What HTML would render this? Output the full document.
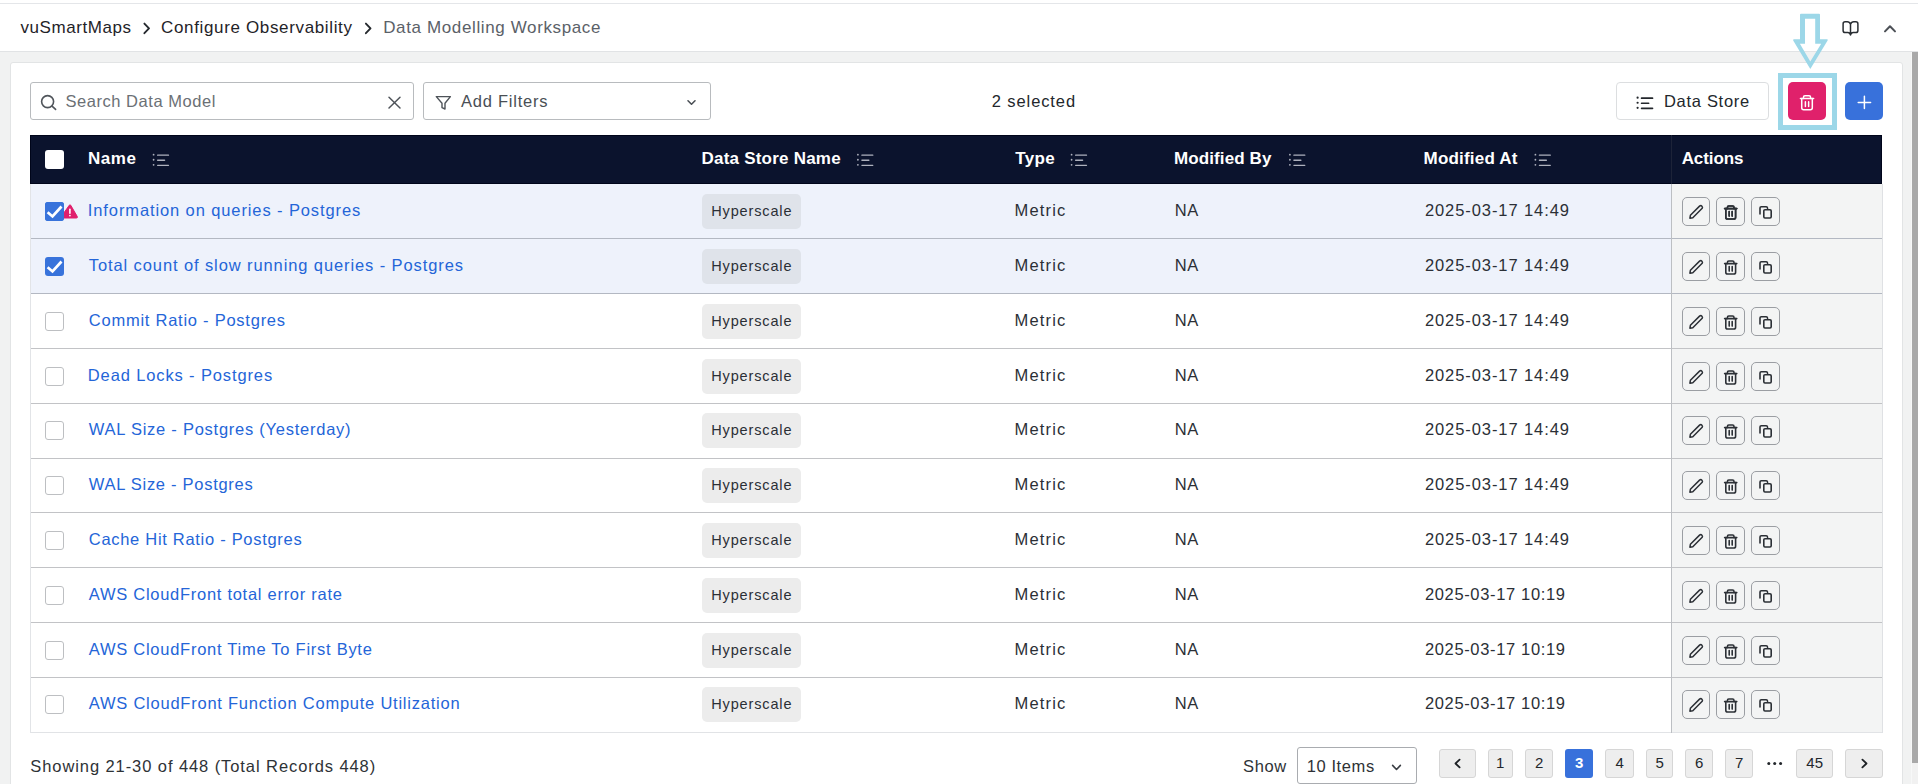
<!DOCTYPE html>
<html><head><meta charset="utf-8"><style>
html,body{margin:0;padding:0}
body{width:1918px;height:784px;overflow:hidden;position:relative;background:#fff;font-family:"Liberation Sans", sans-serif}
.a{position:absolute}
.t{position:absolute;white-space:pre}
</style></head><body>
<div class="a" style="left:0px;top:3px;width:1918px;height:1px;background:#e4e6e9"></div>
<div class="a" style="left:0px;top:51px;width:1918px;height:1px;background:#e1e3e5"></div>
<div class="a" style="left:0px;top:52px;width:1912px;height:732px;background:#f1f2f2"></div>
<div class="a" style="left:1911px;top:52px;width:1px;height:732px;background:#f7f8f8"></div>
<div class="a" style="left:1912px;top:52px;width:6px;height:732px;background:#f1f1f1"></div>
<div class="a" style="left:1912px;top:52px;width:6px;height:711px;background:#a9a9a9"></div>
<div class="a" style="left:10px;top:62px;width:1893px;height:738px;background:#fff;border:1px solid #e2e4e5;border-radius:3px;box-sizing:border-box"></div>
<div class="a" style="left:30px;top:82px;width:384px;height:38px;border:1px solid #b8bbbe;border-radius:3px;box-sizing:border-box;background:#fff"></div>
<div class="a" style="left:423px;top:82px;width:288px;height:38px;border:1px solid #b8bbbe;border-radius:3px;box-sizing:border-box;background:#fff"></div>
<div class="a" style="left:1616px;top:82px;width:153px;height:38px;border:1px solid #dcdee0;border-radius:4px;box-sizing:border-box;background:#fff"></div>
<div class="a" style="left:1778px;top:73px;width:59px;height:57px;border:5px solid #9cd7e8;box-sizing:border-box"></div>
<div class="a" style="left:1788px;top:82px;width:38px;height:38px;background:#e0216b;border-radius:5px"></div>
<div class="a" style="left:1845px;top:82px;width:38px;height:38px;background:#3871db;border-radius:5px"></div>
<div class="a" style="left:30px;top:135px;width:1852px;height:49px;background:#0b132d;border:1px solid #00051a;box-sizing:border-box"></div>
<div class="a" style="left:1671px;top:135px;width:1px;height:49px;background:#1d2338"></div>
<div class="a" style="left:45px;top:150px;width:19px;height:19px;background:#fff;border-radius:3px"></div>
<div class="a" style="left:30px;top:184px;width:1641px;height:54px;background:#eef2fb"></div>
<div class="a" style="left:1671px;top:184px;width:211px;height:54px;background:#f3f4f4"></div>
<div class="a" style="left:30px;top:238px;width:1853px;height:1px;background:#b3b8c2"></div>
<div class="a" style="left:702px;top:194px;width:99px;height:35px;background:#dfe3ea;border-radius:5px"></div>
<svg class="a" style="left:45px;top:202px" width="19" height="19" viewBox="0 0 19 19"><rect x="0" y="0" width="19" height="19" rx="3" fill="#3873db"/><path d="M2.6 10.2 L7.5 14.4 L16.5 4.5" fill="none" stroke="#fff" stroke-width="2.7"/></svg>
<div class="a" style="left:1682px;top:197px;width:28px;height:29px;border:1px solid #9b9ea3;border-radius:5px;box-sizing:border-box"></div>
<div class="a" style="left:1716px;top:197px;width:29px;height:29px;border:1px solid #9b9ea3;border-radius:5px;box-sizing:border-box"></div>
<div class="a" style="left:1751px;top:197px;width:29px;height:29px;border:1px solid #9b9ea3;border-radius:5px;box-sizing:border-box"></div>
<div class="a" style="left:30px;top:239px;width:1641px;height:54px;background:#eef2fb"></div>
<div class="a" style="left:1671px;top:239px;width:211px;height:54px;background:#f3f4f4"></div>
<div class="a" style="left:30px;top:293px;width:1853px;height:1px;background:#b3b8c2"></div>
<div class="a" style="left:702px;top:249px;width:99px;height:35px;background:#dfe3ea;border-radius:5px"></div>
<svg class="a" style="left:45px;top:257px" width="19" height="19" viewBox="0 0 19 19"><rect x="0" y="0" width="19" height="19" rx="3" fill="#3873db"/><path d="M2.6 10.2 L7.5 14.4 L16.5 4.5" fill="none" stroke="#fff" stroke-width="2.7"/></svg>
<div class="a" style="left:1682px;top:252px;width:28px;height:29px;border:1px solid #9b9ea3;border-radius:5px;box-sizing:border-box"></div>
<div class="a" style="left:1716px;top:252px;width:29px;height:29px;border:1px solid #9b9ea3;border-radius:5px;box-sizing:border-box"></div>
<div class="a" style="left:1751px;top:252px;width:29px;height:29px;border:1px solid #9b9ea3;border-radius:5px;box-sizing:border-box"></div>
<div class="a" style="left:30px;top:294px;width:1641px;height:54px;background:#ffffff"></div>
<div class="a" style="left:1671px;top:294px;width:211px;height:54px;background:#f3f4f4"></div>
<div class="a" style="left:30px;top:348px;width:1853px;height:1px;background:#c2c3c6"></div>
<div class="a" style="left:702px;top:304px;width:99px;height:35px;background:#ececec;border-radius:5px"></div>
<div class="a" style="left:45px;top:312px;width:19px;height:19px;border:1px solid #bdbfc2;border-radius:3px;box-sizing:border-box;background:#fff"></div>
<div class="a" style="left:1682px;top:307px;width:28px;height:29px;border:1px solid #9b9ea3;border-radius:5px;box-sizing:border-box"></div>
<div class="a" style="left:1716px;top:307px;width:29px;height:29px;border:1px solid #9b9ea3;border-radius:5px;box-sizing:border-box"></div>
<div class="a" style="left:1751px;top:307px;width:29px;height:29px;border:1px solid #9b9ea3;border-radius:5px;box-sizing:border-box"></div>
<div class="a" style="left:30px;top:349px;width:1641px;height:54px;background:#ffffff"></div>
<div class="a" style="left:1671px;top:349px;width:211px;height:54px;background:#f3f4f4"></div>
<div class="a" style="left:30px;top:403px;width:1853px;height:1px;background:#c2c3c6"></div>
<div class="a" style="left:702px;top:359px;width:99px;height:35px;background:#ececec;border-radius:5px"></div>
<div class="a" style="left:45px;top:367px;width:19px;height:19px;border:1px solid #bdbfc2;border-radius:3px;box-sizing:border-box;background:#fff"></div>
<div class="a" style="left:1682px;top:362px;width:28px;height:29px;border:1px solid #9b9ea3;border-radius:5px;box-sizing:border-box"></div>
<div class="a" style="left:1716px;top:362px;width:29px;height:29px;border:1px solid #9b9ea3;border-radius:5px;box-sizing:border-box"></div>
<div class="a" style="left:1751px;top:362px;width:29px;height:29px;border:1px solid #9b9ea3;border-radius:5px;box-sizing:border-box"></div>
<div class="a" style="left:30px;top:404px;width:1641px;height:54px;background:#ffffff"></div>
<div class="a" style="left:1671px;top:404px;width:211px;height:54px;background:#f3f4f4"></div>
<div class="a" style="left:30px;top:458px;width:1853px;height:1px;background:#c2c3c6"></div>
<div class="a" style="left:702px;top:413px;width:99px;height:35px;background:#ececec;border-radius:5px"></div>
<div class="a" style="left:45px;top:421px;width:19px;height:19px;border:1px solid #bdbfc2;border-radius:3px;box-sizing:border-box;background:#fff"></div>
<div class="a" style="left:1682px;top:416px;width:28px;height:29px;border:1px solid #9b9ea3;border-radius:5px;box-sizing:border-box"></div>
<div class="a" style="left:1716px;top:416px;width:29px;height:29px;border:1px solid #9b9ea3;border-radius:5px;box-sizing:border-box"></div>
<div class="a" style="left:1751px;top:416px;width:29px;height:29px;border:1px solid #9b9ea3;border-radius:5px;box-sizing:border-box"></div>
<div class="a" style="left:30px;top:459px;width:1641px;height:53px;background:#ffffff"></div>
<div class="a" style="left:1671px;top:459px;width:211px;height:53px;background:#f3f4f4"></div>
<div class="a" style="left:30px;top:512px;width:1853px;height:1px;background:#c2c3c6"></div>
<div class="a" style="left:702px;top:468px;width:99px;height:35px;background:#ececec;border-radius:5px"></div>
<div class="a" style="left:45px;top:476px;width:19px;height:19px;border:1px solid #bdbfc2;border-radius:3px;box-sizing:border-box;background:#fff"></div>
<div class="a" style="left:1682px;top:471px;width:28px;height:29px;border:1px solid #9b9ea3;border-radius:5px;box-sizing:border-box"></div>
<div class="a" style="left:1716px;top:471px;width:29px;height:29px;border:1px solid #9b9ea3;border-radius:5px;box-sizing:border-box"></div>
<div class="a" style="left:1751px;top:471px;width:29px;height:29px;border:1px solid #9b9ea3;border-radius:5px;box-sizing:border-box"></div>
<div class="a" style="left:30px;top:513px;width:1641px;height:54px;background:#ffffff"></div>
<div class="a" style="left:1671px;top:513px;width:211px;height:54px;background:#f3f4f4"></div>
<div class="a" style="left:30px;top:567px;width:1853px;height:1px;background:#c2c3c6"></div>
<div class="a" style="left:702px;top:523px;width:99px;height:35px;background:#ececec;border-radius:5px"></div>
<div class="a" style="left:45px;top:531px;width:19px;height:19px;border:1px solid #bdbfc2;border-radius:3px;box-sizing:border-box;background:#fff"></div>
<div class="a" style="left:1682px;top:526px;width:28px;height:29px;border:1px solid #9b9ea3;border-radius:5px;box-sizing:border-box"></div>
<div class="a" style="left:1716px;top:526px;width:29px;height:29px;border:1px solid #9b9ea3;border-radius:5px;box-sizing:border-box"></div>
<div class="a" style="left:1751px;top:526px;width:29px;height:29px;border:1px solid #9b9ea3;border-radius:5px;box-sizing:border-box"></div>
<div class="a" style="left:30px;top:568px;width:1641px;height:54px;background:#ffffff"></div>
<div class="a" style="left:1671px;top:568px;width:211px;height:54px;background:#f3f4f4"></div>
<div class="a" style="left:30px;top:622px;width:1853px;height:1px;background:#c2c3c6"></div>
<div class="a" style="left:702px;top:578px;width:99px;height:35px;background:#ececec;border-radius:5px"></div>
<div class="a" style="left:45px;top:586px;width:19px;height:19px;border:1px solid #bdbfc2;border-radius:3px;box-sizing:border-box;background:#fff"></div>
<div class="a" style="left:1682px;top:581px;width:28px;height:29px;border:1px solid #9b9ea3;border-radius:5px;box-sizing:border-box"></div>
<div class="a" style="left:1716px;top:581px;width:29px;height:29px;border:1px solid #9b9ea3;border-radius:5px;box-sizing:border-box"></div>
<div class="a" style="left:1751px;top:581px;width:29px;height:29px;border:1px solid #9b9ea3;border-radius:5px;box-sizing:border-box"></div>
<div class="a" style="left:30px;top:623px;width:1641px;height:54px;background:#ffffff"></div>
<div class="a" style="left:1671px;top:623px;width:211px;height:54px;background:#f3f4f4"></div>
<div class="a" style="left:30px;top:677px;width:1853px;height:1px;background:#c2c3c6"></div>
<div class="a" style="left:702px;top:633px;width:99px;height:35px;background:#ececec;border-radius:5px"></div>
<div class="a" style="left:45px;top:641px;width:19px;height:19px;border:1px solid #bdbfc2;border-radius:3px;box-sizing:border-box;background:#fff"></div>
<div class="a" style="left:1682px;top:636px;width:28px;height:29px;border:1px solid #9b9ea3;border-radius:5px;box-sizing:border-box"></div>
<div class="a" style="left:1716px;top:636px;width:29px;height:29px;border:1px solid #9b9ea3;border-radius:5px;box-sizing:border-box"></div>
<div class="a" style="left:1751px;top:636px;width:29px;height:29px;border:1px solid #9b9ea3;border-radius:5px;box-sizing:border-box"></div>
<div class="a" style="left:30px;top:678px;width:1641px;height:54px;background:#ffffff"></div>
<div class="a" style="left:1671px;top:678px;width:211px;height:54px;background:#f3f4f4"></div>
<div class="a" style="left:30px;top:732px;width:1853px;height:1px;background:#e1e3e6"></div>
<div class="a" style="left:702px;top:687px;width:99px;height:35px;background:#ececec;border-radius:5px"></div>
<div class="a" style="left:45px;top:695px;width:19px;height:19px;border:1px solid #bdbfc2;border-radius:3px;box-sizing:border-box;background:#fff"></div>
<div class="a" style="left:1682px;top:690px;width:28px;height:29px;border:1px solid #9b9ea3;border-radius:5px;box-sizing:border-box"></div>
<div class="a" style="left:1716px;top:690px;width:29px;height:29px;border:1px solid #9b9ea3;border-radius:5px;box-sizing:border-box"></div>
<div class="a" style="left:1751px;top:690px;width:29px;height:29px;border:1px solid #9b9ea3;border-radius:5px;box-sizing:border-box"></div>
<div class="a" style="left:30px;top:184px;width:1px;height:549px;background:#e2e4e7"></div>
<div class="a" style="left:1671px;top:184px;width:1px;height:549px;background:#bcbfc3"></div>
<div class="a" style="left:1882px;top:184px;width:1px;height:549px;background:#dfe1e4"></div>
<div class="a" style="left:1439px;top:749px;width:37px;height:29px;background:#eeeeee;border:1px solid #d6d6d6;border-radius:3px;box-sizing:border-box"></div>
<div class="a" style="left:1488px;top:749px;width:25px;height:29px;background:#eeeeee;border:1px solid #d6d6d6;border-radius:3px;box-sizing:border-box"></div>
<div class="a" style="left:1525px;top:749px;width:28px;height:29px;background:#eeeeee;border:1px solid #d6d6d6;border-radius:3px;box-sizing:border-box"></div>
<div class="a" style="left:1565px;top:749px;width:28px;height:29px;background:#3871db;border-radius:3px"></div>
<div class="a" style="left:1605px;top:749px;width:29px;height:29px;background:#eeeeee;border:1px solid #d6d6d6;border-radius:3px;box-sizing:border-box"></div>
<div class="a" style="left:1646px;top:749px;width:27px;height:29px;background:#eeeeee;border:1px solid #d6d6d6;border-radius:3px;box-sizing:border-box"></div>
<div class="a" style="left:1685px;top:749px;width:28px;height:29px;background:#eeeeee;border:1px solid #d6d6d6;border-radius:3px;box-sizing:border-box"></div>
<div class="a" style="left:1725px;top:749px;width:28px;height:29px;background:#eeeeee;border:1px solid #d6d6d6;border-radius:3px;box-sizing:border-box"></div>
<div class="a" style="left:1796px;top:749px;width:37px;height:29px;background:#eeeeee;border:1px solid #d6d6d6;border-radius:3px;box-sizing:border-box"></div>
<div class="a" style="left:1845px;top:749px;width:38px;height:29px;background:#eeeeee;border:1px solid #d6d6d6;border-radius:3px;box-sizing:border-box"></div>
<div class="a" style="left:1297px;top:747px;width:120px;height:37px;border:1px solid #a9acb0;border-radius:3px;box-sizing:border-box;background:#fff"></div>
<svg class="a" style="left:0;top:0" width="1918" height="784" viewBox="0 0 1918 784"><path d="M144.4 23.6 L149 28.4 L144.4 33.2" fill="none" stroke="#25292e" stroke-width="1.9" stroke-linecap="round" stroke-linejoin="round" /><path d="M365.9 23.6 L370.5 28.4 L365.9 33.2" fill="none" stroke="#25292e" stroke-width="1.9" stroke-linecap="round" stroke-linejoin="round" /><path d="M1850.5 24.2 Q1849.6 21.8 1847.3 21.8 H1845.2 Q1843.1 21.8 1843.1 23.9 V30.5 Q1843.1 32.6 1845.2 32.6 H1848 Q1849.3 32.6 1850.5 34.6 Q1851.7 32.6 1853 32.6 H1855.8 Q1857.9 32.6 1857.9 30.5 V23.9 Q1857.9 21.8 1855.8 21.8 H1853.7 Q1851.4 21.8 1850.5 24.2 Z M1850.5 24.2 V35" fill="none" stroke="#2a2e33" stroke-width="1.5" stroke-linecap="round" stroke-linejoin="round" /><path d="M1885 31.4 L1890 26.2 L1895 31.4" fill="none" stroke="#4d5157" stroke-width="2" stroke-linecap="round" stroke-linejoin="round" /><path fill-rule="evenodd" fill="#9cd7e8" d="M1801 13.8 H1819 Q1820 13.8 1820 14.8 V39.2 H1827.2 Q1828.2 39.6 1827.6 40.4 L1810.3 69 L1793.2 40.4 Q1792.8 39.4 1793.8 39.2 H1800 V14.8 Q1800 13.8 1801 13.8 Z M1805 18.8 V43.8 H1799.9 L1810.3 61.6 L1821.2 43.8 H1815.2 V18.8 Z"/><circle cx="47.6" cy="101.6" r="6" fill="none" stroke="#50555b" stroke-width="1.6"/><path d="M52.3 106.3 L55.6 109.4" fill="none" stroke="#50555b" stroke-width="1.6" stroke-linecap="round" stroke-linejoin="round" /><path d="M389 97.3 L400 108 M400 97.3 L389 108" fill="none" stroke="#4e5359" stroke-width="1.5" stroke-linecap="round" stroke-linejoin="round" /><path d="M436.3 96.6 H450.4 L445 103.2 V109 L442 107.6 V103.2 Z" fill="none" stroke="#4e5359" stroke-width="1.4" stroke-linecap="round" stroke-linejoin="round" /><path d="M688 100.8 L691.5 104.2 L695 100.8" fill="none" stroke="#4a4f55" stroke-width="1.6" stroke-linecap="round" stroke-linejoin="round" /><path d="M1641.6 98.2 H1652.5" fill="none" stroke="#23272c" stroke-width="1.7" stroke-linecap="round" stroke-linejoin="round" /><circle cx="1637.6" cy="97.7" r="1.1" fill="#23272c"/><path d="M1641.6 103.25 H1648.6" fill="none" stroke="#23272c" stroke-width="1.7" stroke-linecap="round" stroke-linejoin="round" /><circle cx="1637.6" cy="102.75" r="1.1" fill="#23272c"/><path d="M1641.6 108.3 H1652.5" fill="none" stroke="#23272c" stroke-width="1.7" stroke-linecap="round" stroke-linejoin="round" /><circle cx="1637.6" cy="107.8" r="1.1" fill="#23272c"/><path d="M157.6 155.2 H168.5" fill="none" stroke="#aeb1bd" stroke-width="1.3" stroke-linecap="round" stroke-linejoin="round" /><circle cx="153.6" cy="154.7" r="0.9" fill="#aeb1bd"/><path d="M157.6 160.25 H164.6" fill="none" stroke="#aeb1bd" stroke-width="1.3" stroke-linecap="round" stroke-linejoin="round" /><circle cx="153.6" cy="159.75" r="0.9" fill="#aeb1bd"/><path d="M157.6 165.29999999999998 H168.5" fill="none" stroke="#aeb1bd" stroke-width="1.3" stroke-linecap="round" stroke-linejoin="round" /><circle cx="153.6" cy="164.79999999999998" r="0.9" fill="#aeb1bd"/><path d="M861.9 155.2 H872.8" fill="none" stroke="#aeb1bd" stroke-width="1.3" stroke-linecap="round" stroke-linejoin="round" /><circle cx="857.9" cy="154.7" r="0.9" fill="#aeb1bd"/><path d="M861.9 160.25 H868.9" fill="none" stroke="#aeb1bd" stroke-width="1.3" stroke-linecap="round" stroke-linejoin="round" /><circle cx="857.9" cy="159.75" r="0.9" fill="#aeb1bd"/><path d="M861.9 165.29999999999998 H872.8" fill="none" stroke="#aeb1bd" stroke-width="1.3" stroke-linecap="round" stroke-linejoin="round" /><circle cx="857.9" cy="164.79999999999998" r="0.9" fill="#aeb1bd"/><path d="M1075.6 155.2 H1086.5" fill="none" stroke="#aeb1bd" stroke-width="1.3" stroke-linecap="round" stroke-linejoin="round" /><circle cx="1071.6" cy="154.7" r="0.9" fill="#aeb1bd"/><path d="M1075.6 160.25 H1082.6" fill="none" stroke="#aeb1bd" stroke-width="1.3" stroke-linecap="round" stroke-linejoin="round" /><circle cx="1071.6" cy="159.75" r="0.9" fill="#aeb1bd"/><path d="M1075.6 165.29999999999998 H1086.5" fill="none" stroke="#aeb1bd" stroke-width="1.3" stroke-linecap="round" stroke-linejoin="round" /><circle cx="1071.6" cy="164.79999999999998" r="0.9" fill="#aeb1bd"/><path d="M1293.8999999999999 155.2 H1304.8" fill="none" stroke="#aeb1bd" stroke-width="1.3" stroke-linecap="round" stroke-linejoin="round" /><circle cx="1289.8999999999999" cy="154.7" r="0.9" fill="#aeb1bd"/><path d="M1293.8999999999999 160.25 H1300.8999999999999" fill="none" stroke="#aeb1bd" stroke-width="1.3" stroke-linecap="round" stroke-linejoin="round" /><circle cx="1289.8999999999999" cy="159.75" r="0.9" fill="#aeb1bd"/><path d="M1293.8999999999999 165.29999999999998 H1304.8" fill="none" stroke="#aeb1bd" stroke-width="1.3" stroke-linecap="round" stroke-linejoin="round" /><circle cx="1289.8999999999999" cy="164.79999999999998" r="0.9" fill="#aeb1bd"/><path d="M1539.3999999999999 155.2 H1550.3" fill="none" stroke="#aeb1bd" stroke-width="1.3" stroke-linecap="round" stroke-linejoin="round" /><circle cx="1535.3999999999999" cy="154.7" r="0.9" fill="#aeb1bd"/><path d="M1539.3999999999999 160.25 H1546.3999999999999" fill="none" stroke="#aeb1bd" stroke-width="1.3" stroke-linecap="round" stroke-linejoin="round" /><circle cx="1535.3999999999999" cy="159.75" r="0.9" fill="#aeb1bd"/><path d="M1539.3999999999999 165.29999999999998 H1550.3" fill="none" stroke="#aeb1bd" stroke-width="1.3" stroke-linecap="round" stroke-linejoin="round" /><circle cx="1535.3999999999999" cy="164.79999999999998" r="0.9" fill="#aeb1bd"/><path d="M1724.60 208.60 H1736.80" fill="none" stroke="#2c3036" stroke-width="1.6" stroke-linecap="round" stroke-linejoin="round" /><path d="M1727.40 208.60 V207.40 Q1727.40 206.00 1728.80 206.00 H1732.60 Q1734.00 206.00 1734.00 207.40 V208.60" fill="none" stroke="#2c3036" stroke-width="1.6" stroke-linecap="round" stroke-linejoin="round" /><path d="M1725.80 208.60 V217.20 Q1725.80 219.00 1727.60 219.00 H1733.80 Q1735.60 219.00 1735.60 217.20 V208.60" fill="none" stroke="#2c3036" stroke-width="1.6" stroke-linecap="round" stroke-linejoin="round" /><path d="M1729.20 211.60 V216.10 M1732.20 211.60 V216.10" fill="none" stroke="#2c3036" stroke-width="1.6" stroke-linecap="round" stroke-linejoin="round" /><path d="M1800.43 98.44 H1813.61" fill="none" stroke="#ffffff" stroke-width="1.5" stroke-linecap="round" stroke-linejoin="round" /><path d="M1803.46 98.44 V97.14 Q1803.46 95.63 1804.97 95.63 H1809.07 Q1810.58 95.63 1810.58 97.14 V98.44" fill="none" stroke="#ffffff" stroke-width="1.5" stroke-linecap="round" stroke-linejoin="round" /><path d="M1801.73 98.44 V107.73 Q1801.73 109.67 1803.67 109.67 H1810.37 Q1812.31 109.67 1812.31 107.73 V98.44" fill="none" stroke="#ffffff" stroke-width="1.5" stroke-linecap="round" stroke-linejoin="round" /><path d="M1805.40 101.68 V106.54 M1808.64 101.68 V106.54" fill="none" stroke="#ffffff" stroke-width="1.5" stroke-linecap="round" stroke-linejoin="round" /><path d="M1864.4 96.2 V108.6 M1858.2 102.4 H1870.6" fill="none" stroke="#ffffff" stroke-width="1.5" stroke-linecap="round" stroke-linejoin="round" /><path d="M1459.6 759.6 L1455.5 763.5 L1459.6 767.4" fill="none" stroke="#1e2226" stroke-width="1.8" stroke-linecap="round" stroke-linejoin="round" /><path d="M1862.4 759.6 L1866.5 763.5 L1862.4 767.4" fill="none" stroke="#1e2226" stroke-width="1.8" stroke-linecap="round" stroke-linejoin="round" /><circle cx="1768.8" cy="763.4" r="1.5" fill="#23272c"/><circle cx="1774.7" cy="763.4" r="1.5" fill="#23272c"/><circle cx="1780.6" cy="763.4" r="1.5" fill="#23272c"/><path d="M1392.6 765.4 L1396.5 769.5 L1400.4 765.4" fill="none" stroke="#3a3e44" stroke-width="1.6" stroke-linecap="round" stroke-linejoin="round" /><path d="M1689.9 218.20 L1690.4 215.30 L1699.8 205.90 A1.75 1.75 0 0 1 1702.2 208.30 L1692.8 217.70 Z" fill="none" stroke="#2c3036" stroke-width="1.5" stroke-linecap="round" stroke-linejoin="round" /><path d="M1724.60 208.60 H1736.80" fill="none" stroke="#2c3036" stroke-width="1.6" stroke-linecap="round" stroke-linejoin="round" /><path d="M1727.40 208.60 V207.40 Q1727.40 206.00 1728.80 206.00 H1732.60 Q1734.00 206.00 1734.00 207.40 V208.60" fill="none" stroke="#2c3036" stroke-width="1.6" stroke-linecap="round" stroke-linejoin="round" /><path d="M1725.80 208.60 V217.20 Q1725.80 219.00 1727.60 219.00 H1733.80 Q1735.60 219.00 1735.60 217.20 V208.60" fill="none" stroke="#2c3036" stroke-width="1.6" stroke-linecap="round" stroke-linejoin="round" /><path d="M1729.20 211.60 V216.10 M1732.20 211.60 V216.10" fill="none" stroke="#2c3036" stroke-width="1.6" stroke-linecap="round" stroke-linejoin="round" /><path d="M1763.8 210.80 Q1763.8 209.80 1765 209.80 H1770 Q1771.2 209.80 1771.2 211.00 V216.80 Q1771.2 218.00 1770 218.00 H1765 Q1763.8 218.00 1763.8 216.80 Z" fill="none" stroke="#2c3036" stroke-width="1.6" stroke-linecap="round" stroke-linejoin="round" /><path d="M1760 214.00 V208.00 Q1760 206.70 1761.3 206.70 H1766.2 Q1767.4 206.70 1767.6 208.40" fill="none" stroke="#2c3036" stroke-width="1.6" stroke-linecap="round" stroke-linejoin="round" /><path d="M1689.9 273.20 L1690.4 270.30 L1699.8 260.90 A1.75 1.75 0 0 1 1702.2 263.30 L1692.8 272.70 Z" fill="none" stroke="#2c3036" stroke-width="1.5" stroke-linecap="round" stroke-linejoin="round" /><path d="M1724.60 263.60 H1736.80" fill="none" stroke="#2c3036" stroke-width="1.6" stroke-linecap="round" stroke-linejoin="round" /><path d="M1727.40 263.60 V262.40 Q1727.40 261.00 1728.80 261.00 H1732.60 Q1734.00 261.00 1734.00 262.40 V263.60" fill="none" stroke="#2c3036" stroke-width="1.6" stroke-linecap="round" stroke-linejoin="round" /><path d="M1725.80 263.60 V272.20 Q1725.80 274.00 1727.60 274.00 H1733.80 Q1735.60 274.00 1735.60 272.20 V263.60" fill="none" stroke="#2c3036" stroke-width="1.6" stroke-linecap="round" stroke-linejoin="round" /><path d="M1729.20 266.60 V271.10 M1732.20 266.60 V271.10" fill="none" stroke="#2c3036" stroke-width="1.6" stroke-linecap="round" stroke-linejoin="round" /><path d="M1763.8 265.80 Q1763.8 264.80 1765 264.80 H1770 Q1771.2 264.80 1771.2 266.00 V271.80 Q1771.2 273.00 1770 273.00 H1765 Q1763.8 273.00 1763.8 271.80 Z" fill="none" stroke="#2c3036" stroke-width="1.6" stroke-linecap="round" stroke-linejoin="round" /><path d="M1760 269.00 V263.00 Q1760 261.70 1761.3 261.70 H1766.2 Q1767.4 261.70 1767.6 263.40" fill="none" stroke="#2c3036" stroke-width="1.6" stroke-linecap="round" stroke-linejoin="round" /><path d="M1689.9 328.20 L1690.4 325.30 L1699.8 315.90 A1.75 1.75 0 0 1 1702.2 318.30 L1692.8 327.70 Z" fill="none" stroke="#2c3036" stroke-width="1.5" stroke-linecap="round" stroke-linejoin="round" /><path d="M1724.60 318.60 H1736.80" fill="none" stroke="#2c3036" stroke-width="1.6" stroke-linecap="round" stroke-linejoin="round" /><path d="M1727.40 318.60 V317.40 Q1727.40 316.00 1728.80 316.00 H1732.60 Q1734.00 316.00 1734.00 317.40 V318.60" fill="none" stroke="#2c3036" stroke-width="1.6" stroke-linecap="round" stroke-linejoin="round" /><path d="M1725.80 318.60 V327.20 Q1725.80 329.00 1727.60 329.00 H1733.80 Q1735.60 329.00 1735.60 327.20 V318.60" fill="none" stroke="#2c3036" stroke-width="1.6" stroke-linecap="round" stroke-linejoin="round" /><path d="M1729.20 321.60 V326.10 M1732.20 321.60 V326.10" fill="none" stroke="#2c3036" stroke-width="1.6" stroke-linecap="round" stroke-linejoin="round" /><path d="M1763.8 320.80 Q1763.8 319.80 1765 319.80 H1770 Q1771.2 319.80 1771.2 321.00 V326.80 Q1771.2 328.00 1770 328.00 H1765 Q1763.8 328.00 1763.8 326.80 Z" fill="none" stroke="#2c3036" stroke-width="1.6" stroke-linecap="round" stroke-linejoin="round" /><path d="M1760 324.00 V318.00 Q1760 316.70 1761.3 316.70 H1766.2 Q1767.4 316.70 1767.6 318.40" fill="none" stroke="#2c3036" stroke-width="1.6" stroke-linecap="round" stroke-linejoin="round" /><path d="M1689.9 383.20 L1690.4 380.30 L1699.8 370.90 A1.75 1.75 0 0 1 1702.2 373.30 L1692.8 382.70 Z" fill="none" stroke="#2c3036" stroke-width="1.5" stroke-linecap="round" stroke-linejoin="round" /><path d="M1724.60 373.60 H1736.80" fill="none" stroke="#2c3036" stroke-width="1.6" stroke-linecap="round" stroke-linejoin="round" /><path d="M1727.40 373.60 V372.40 Q1727.40 371.00 1728.80 371.00 H1732.60 Q1734.00 371.00 1734.00 372.40 V373.60" fill="none" stroke="#2c3036" stroke-width="1.6" stroke-linecap="round" stroke-linejoin="round" /><path d="M1725.80 373.60 V382.20 Q1725.80 384.00 1727.60 384.00 H1733.80 Q1735.60 384.00 1735.60 382.20 V373.60" fill="none" stroke="#2c3036" stroke-width="1.6" stroke-linecap="round" stroke-linejoin="round" /><path d="M1729.20 376.60 V381.10 M1732.20 376.60 V381.10" fill="none" stroke="#2c3036" stroke-width="1.6" stroke-linecap="round" stroke-linejoin="round" /><path d="M1763.8 375.80 Q1763.8 374.80 1765 374.80 H1770 Q1771.2 374.80 1771.2 376.00 V381.80 Q1771.2 383.00 1770 383.00 H1765 Q1763.8 383.00 1763.8 381.80 Z" fill="none" stroke="#2c3036" stroke-width="1.6" stroke-linecap="round" stroke-linejoin="round" /><path d="M1760 379.00 V373.00 Q1760 371.70 1761.3 371.70 H1766.2 Q1767.4 371.70 1767.6 373.40" fill="none" stroke="#2c3036" stroke-width="1.6" stroke-linecap="round" stroke-linejoin="round" /><path d="M1689.9 437.20 L1690.4 434.30 L1699.8 424.90 A1.75 1.75 0 0 1 1702.2 427.30 L1692.8 436.70 Z" fill="none" stroke="#2c3036" stroke-width="1.5" stroke-linecap="round" stroke-linejoin="round" /><path d="M1724.60 427.60 H1736.80" fill="none" stroke="#2c3036" stroke-width="1.6" stroke-linecap="round" stroke-linejoin="round" /><path d="M1727.40 427.60 V426.40 Q1727.40 425.00 1728.80 425.00 H1732.60 Q1734.00 425.00 1734.00 426.40 V427.60" fill="none" stroke="#2c3036" stroke-width="1.6" stroke-linecap="round" stroke-linejoin="round" /><path d="M1725.80 427.60 V436.20 Q1725.80 438.00 1727.60 438.00 H1733.80 Q1735.60 438.00 1735.60 436.20 V427.60" fill="none" stroke="#2c3036" stroke-width="1.6" stroke-linecap="round" stroke-linejoin="round" /><path d="M1729.20 430.60 V435.10 M1732.20 430.60 V435.10" fill="none" stroke="#2c3036" stroke-width="1.6" stroke-linecap="round" stroke-linejoin="round" /><path d="M1763.8 429.80 Q1763.8 428.80 1765 428.80 H1770 Q1771.2 428.80 1771.2 430.00 V435.80 Q1771.2 437.00 1770 437.00 H1765 Q1763.8 437.00 1763.8 435.80 Z" fill="none" stroke="#2c3036" stroke-width="1.6" stroke-linecap="round" stroke-linejoin="round" /><path d="M1760 433.00 V427.00 Q1760 425.70 1761.3 425.70 H1766.2 Q1767.4 425.70 1767.6 427.40" fill="none" stroke="#2c3036" stroke-width="1.6" stroke-linecap="round" stroke-linejoin="round" /><path d="M1689.9 492.20 L1690.4 489.30 L1699.8 479.90 A1.75 1.75 0 0 1 1702.2 482.30 L1692.8 491.70 Z" fill="none" stroke="#2c3036" stroke-width="1.5" stroke-linecap="round" stroke-linejoin="round" /><path d="M1724.60 482.60 H1736.80" fill="none" stroke="#2c3036" stroke-width="1.6" stroke-linecap="round" stroke-linejoin="round" /><path d="M1727.40 482.60 V481.40 Q1727.40 480.00 1728.80 480.00 H1732.60 Q1734.00 480.00 1734.00 481.40 V482.60" fill="none" stroke="#2c3036" stroke-width="1.6" stroke-linecap="round" stroke-linejoin="round" /><path d="M1725.80 482.60 V491.20 Q1725.80 493.00 1727.60 493.00 H1733.80 Q1735.60 493.00 1735.60 491.20 V482.60" fill="none" stroke="#2c3036" stroke-width="1.6" stroke-linecap="round" stroke-linejoin="round" /><path d="M1729.20 485.60 V490.10 M1732.20 485.60 V490.10" fill="none" stroke="#2c3036" stroke-width="1.6" stroke-linecap="round" stroke-linejoin="round" /><path d="M1763.8 484.80 Q1763.8 483.80 1765 483.80 H1770 Q1771.2 483.80 1771.2 485.00 V490.80 Q1771.2 492.00 1770 492.00 H1765 Q1763.8 492.00 1763.8 490.80 Z" fill="none" stroke="#2c3036" stroke-width="1.6" stroke-linecap="round" stroke-linejoin="round" /><path d="M1760 488.00 V482.00 Q1760 480.70 1761.3 480.70 H1766.2 Q1767.4 480.70 1767.6 482.40" fill="none" stroke="#2c3036" stroke-width="1.6" stroke-linecap="round" stroke-linejoin="round" /><path d="M1689.9 547.20 L1690.4 544.30 L1699.8 534.90 A1.75 1.75 0 0 1 1702.2 537.30 L1692.8 546.70 Z" fill="none" stroke="#2c3036" stroke-width="1.5" stroke-linecap="round" stroke-linejoin="round" /><path d="M1724.60 537.60 H1736.80" fill="none" stroke="#2c3036" stroke-width="1.6" stroke-linecap="round" stroke-linejoin="round" /><path d="M1727.40 537.60 V536.40 Q1727.40 535.00 1728.80 535.00 H1732.60 Q1734.00 535.00 1734.00 536.40 V537.60" fill="none" stroke="#2c3036" stroke-width="1.6" stroke-linecap="round" stroke-linejoin="round" /><path d="M1725.80 537.60 V546.20 Q1725.80 548.00 1727.60 548.00 H1733.80 Q1735.60 548.00 1735.60 546.20 V537.60" fill="none" stroke="#2c3036" stroke-width="1.6" stroke-linecap="round" stroke-linejoin="round" /><path d="M1729.20 540.60 V545.10 M1732.20 540.60 V545.10" fill="none" stroke="#2c3036" stroke-width="1.6" stroke-linecap="round" stroke-linejoin="round" /><path d="M1763.8 539.80 Q1763.8 538.80 1765 538.80 H1770 Q1771.2 538.80 1771.2 540.00 V545.80 Q1771.2 547.00 1770 547.00 H1765 Q1763.8 547.00 1763.8 545.80 Z" fill="none" stroke="#2c3036" stroke-width="1.6" stroke-linecap="round" stroke-linejoin="round" /><path d="M1760 543.00 V537.00 Q1760 535.70 1761.3 535.70 H1766.2 Q1767.4 535.70 1767.6 537.40" fill="none" stroke="#2c3036" stroke-width="1.6" stroke-linecap="round" stroke-linejoin="round" /><path d="M1689.9 602.20 L1690.4 599.30 L1699.8 589.90 A1.75 1.75 0 0 1 1702.2 592.30 L1692.8 601.70 Z" fill="none" stroke="#2c3036" stroke-width="1.5" stroke-linecap="round" stroke-linejoin="round" /><path d="M1724.60 592.60 H1736.80" fill="none" stroke="#2c3036" stroke-width="1.6" stroke-linecap="round" stroke-linejoin="round" /><path d="M1727.40 592.60 V591.40 Q1727.40 590.00 1728.80 590.00 H1732.60 Q1734.00 590.00 1734.00 591.40 V592.60" fill="none" stroke="#2c3036" stroke-width="1.6" stroke-linecap="round" stroke-linejoin="round" /><path d="M1725.80 592.60 V601.20 Q1725.80 603.00 1727.60 603.00 H1733.80 Q1735.60 603.00 1735.60 601.20 V592.60" fill="none" stroke="#2c3036" stroke-width="1.6" stroke-linecap="round" stroke-linejoin="round" /><path d="M1729.20 595.60 V600.10 M1732.20 595.60 V600.10" fill="none" stroke="#2c3036" stroke-width="1.6" stroke-linecap="round" stroke-linejoin="round" /><path d="M1763.8 594.80 Q1763.8 593.80 1765 593.80 H1770 Q1771.2 593.80 1771.2 595.00 V600.80 Q1771.2 602.00 1770 602.00 H1765 Q1763.8 602.00 1763.8 600.80 Z" fill="none" stroke="#2c3036" stroke-width="1.6" stroke-linecap="round" stroke-linejoin="round" /><path d="M1760 598.00 V592.00 Q1760 590.70 1761.3 590.70 H1766.2 Q1767.4 590.70 1767.6 592.40" fill="none" stroke="#2c3036" stroke-width="1.6" stroke-linecap="round" stroke-linejoin="round" /><path d="M1689.9 657.20 L1690.4 654.30 L1699.8 644.90 A1.75 1.75 0 0 1 1702.2 647.30 L1692.8 656.70 Z" fill="none" stroke="#2c3036" stroke-width="1.5" stroke-linecap="round" stroke-linejoin="round" /><path d="M1724.60 647.60 H1736.80" fill="none" stroke="#2c3036" stroke-width="1.6" stroke-linecap="round" stroke-linejoin="round" /><path d="M1727.40 647.60 V646.40 Q1727.40 645.00 1728.80 645.00 H1732.60 Q1734.00 645.00 1734.00 646.40 V647.60" fill="none" stroke="#2c3036" stroke-width="1.6" stroke-linecap="round" stroke-linejoin="round" /><path d="M1725.80 647.60 V656.20 Q1725.80 658.00 1727.60 658.00 H1733.80 Q1735.60 658.00 1735.60 656.20 V647.60" fill="none" stroke="#2c3036" stroke-width="1.6" stroke-linecap="round" stroke-linejoin="round" /><path d="M1729.20 650.60 V655.10 M1732.20 650.60 V655.10" fill="none" stroke="#2c3036" stroke-width="1.6" stroke-linecap="round" stroke-linejoin="round" /><path d="M1763.8 649.80 Q1763.8 648.80 1765 648.80 H1770 Q1771.2 648.80 1771.2 650.00 V655.80 Q1771.2 657.00 1770 657.00 H1765 Q1763.8 657.00 1763.8 655.80 Z" fill="none" stroke="#2c3036" stroke-width="1.6" stroke-linecap="round" stroke-linejoin="round" /><path d="M1760 653.00 V647.00 Q1760 645.70 1761.3 645.70 H1766.2 Q1767.4 645.70 1767.6 647.40" fill="none" stroke="#2c3036" stroke-width="1.6" stroke-linecap="round" stroke-linejoin="round" /><path d="M1689.9 711.20 L1690.4 708.30 L1699.8 698.90 A1.75 1.75 0 0 1 1702.2 701.30 L1692.8 710.70 Z" fill="none" stroke="#2c3036" stroke-width="1.5" stroke-linecap="round" stroke-linejoin="round" /><path d="M1724.60 701.60 H1736.80" fill="none" stroke="#2c3036" stroke-width="1.6" stroke-linecap="round" stroke-linejoin="round" /><path d="M1727.40 701.60 V700.40 Q1727.40 699.00 1728.80 699.00 H1732.60 Q1734.00 699.00 1734.00 700.40 V701.60" fill="none" stroke="#2c3036" stroke-width="1.6" stroke-linecap="round" stroke-linejoin="round" /><path d="M1725.80 701.60 V710.20 Q1725.80 712.00 1727.60 712.00 H1733.80 Q1735.60 712.00 1735.60 710.20 V701.60" fill="none" stroke="#2c3036" stroke-width="1.6" stroke-linecap="round" stroke-linejoin="round" /><path d="M1729.20 704.60 V709.10 M1732.20 704.60 V709.10" fill="none" stroke="#2c3036" stroke-width="1.6" stroke-linecap="round" stroke-linejoin="round" /><path d="M1763.8 703.80 Q1763.8 702.80 1765 702.80 H1770 Q1771.2 702.80 1771.2 704.00 V709.80 Q1771.2 711.00 1770 711.00 H1765 Q1763.8 711.00 1763.8 709.80 Z" fill="none" stroke="#2c3036" stroke-width="1.6" stroke-linecap="round" stroke-linejoin="round" /><path d="M1760 707.00 V701.00 Q1760 699.70 1761.3 699.70 H1766.2 Q1767.4 699.70 1767.6 701.40" fill="none" stroke="#2c3036" stroke-width="1.6" stroke-linecap="round" stroke-linejoin="round" /><path d="M69.3 205.2 Q70 204.2 70.7 205.2 L77.3 216.6 Q77.8 218 76.4 218 H62.2 Q60.8 218 61.3 216.6 Z" fill="#e01f6c" stroke="#e01f6c" stroke-width="1" stroke-linejoin="round"/><path d="M69.9 209.2 V213.3" fill="none" stroke="#ffffff" stroke-width="1.6" stroke-linecap="round" stroke-linejoin="round" /><circle cx="69.9" cy="215.6" r="0.85" fill="#fff"/><rect x="45" y="202" width="19" height="19" rx="3" fill="#3873db"/><path d="M47.6 212.2 L52.5 216.4 L61.5 206.5" fill="none" stroke="#fff" stroke-width="2.7"/></svg>
<span class="t" style="left:20.40px;top:18.61px;font-size:17px;line-height:17px;letter-spacing:0.574px;font-weight:400;color:#1f2328">vuSmartMaps</span>
<span class="t" style="left:161.00px;top:18.61px;font-size:17px;line-height:17px;letter-spacing:0.650px;font-weight:400;color:#1f2328">Configure Observability</span>
<span class="t" style="left:383.20px;top:18.61px;font-size:17px;line-height:17px;letter-spacing:0.627px;font-weight:400;color:#5b6168">Data Modelling Workspace</span>
<span class="t" style="left:65.40px;top:93.03px;font-size:16.5px;line-height:16.5px;letter-spacing:0.545px;font-weight:400;color:#6b7075">Search Data Model</span>
<span class="t" style="left:461.00px;top:93.03px;font-size:16.5px;line-height:16.5px;letter-spacing:0.769px;font-weight:400;color:#4a4f55">Add Filters</span>
<span class="t" style="left:991.80px;top:93.03px;font-size:16.5px;line-height:16.5px;letter-spacing:0.896px;font-weight:400;color:#23272c">2 selected</span>
<span class="t" style="left:1663.90px;top:93.03px;font-size:16.5px;line-height:16.5px;letter-spacing:0.711px;font-weight:400;color:#23272c">Data Store</span>
<span class="t" style="left:87.90px;top:149.61px;font-size:17px;line-height:17px;letter-spacing:0.584px;font-weight:700;color:#ffffff">Name</span>
<span class="t" style="left:701.50px;top:149.61px;font-size:17px;line-height:17px;letter-spacing:0.222px;font-weight:700;color:#ffffff">Data Store Name</span>
<span class="t" style="left:1015.30px;top:149.61px;font-size:17px;line-height:17px;letter-spacing:0.313px;font-weight:700;color:#ffffff">Type</span>
<span class="t" style="left:1173.90px;top:149.61px;font-size:17px;line-height:17px;letter-spacing:0.122px;font-weight:700;color:#ffffff">Modified By</span>
<span class="t" style="left:1423.60px;top:149.61px;font-size:17px;line-height:17px;letter-spacing:0.192px;font-weight:700;color:#ffffff">Modified At</span>
<span class="t" style="left:1681.70px;top:149.61px;font-size:17px;line-height:17px;letter-spacing:-0.097px;font-weight:700;color:#ffffff">Actions</span>
<span class="t" style="left:87.80px;top:202.03px;font-size:16.5px;line-height:16.5px;letter-spacing:0.890px;font-weight:400;color:#2465d8">Information on queries - Postgres</span>
<span class="t" style="left:711.20px;top:203.73px;font-size:14.5px;line-height:14.5px;letter-spacing:0.860px;font-weight:400;color:#2b2f36">Hyperscale</span>
<span class="t" style="left:1014.60px;top:202.03px;font-size:16.5px;line-height:16.5px;letter-spacing:1.147px;font-weight:400;color:#2b2f36">Metric</span>
<span class="t" style="left:1174.70px;top:202.03px;font-size:16.5px;line-height:16.5px;letter-spacing:0.684px;font-weight:400;color:#2b2f36">NA</span>
<span class="t" style="left:1424.90px;top:202.03px;font-size:16.5px;line-height:16.5px;letter-spacing:0.920px;font-weight:400;color:#2b2f36">2025-03-17 14:49</span>
<span class="t" style="left:88.80px;top:257.03px;font-size:16.5px;line-height:16.5px;letter-spacing:0.896px;font-weight:400;color:#2465d8">Total count of slow running queries - Postgres</span>
<span class="t" style="left:711.20px;top:258.73px;font-size:14.5px;line-height:14.5px;letter-spacing:0.860px;font-weight:400;color:#2b2f36">Hyperscale</span>
<span class="t" style="left:1014.60px;top:257.03px;font-size:16.5px;line-height:16.5px;letter-spacing:1.147px;font-weight:400;color:#2b2f36">Metric</span>
<span class="t" style="left:1174.70px;top:257.03px;font-size:16.5px;line-height:16.5px;letter-spacing:0.684px;font-weight:400;color:#2b2f36">NA</span>
<span class="t" style="left:1424.90px;top:257.03px;font-size:16.5px;line-height:16.5px;letter-spacing:0.920px;font-weight:400;color:#2b2f36">2025-03-17 14:49</span>
<span class="t" style="left:88.80px;top:312.03px;font-size:16.5px;line-height:16.5px;letter-spacing:0.752px;font-weight:400;color:#2465d8">Commit Ratio - Postgres</span>
<span class="t" style="left:711.20px;top:313.73px;font-size:14.5px;line-height:14.5px;letter-spacing:0.860px;font-weight:400;color:#2b2f36">Hyperscale</span>
<span class="t" style="left:1014.60px;top:312.03px;font-size:16.5px;line-height:16.5px;letter-spacing:1.147px;font-weight:400;color:#2b2f36">Metric</span>
<span class="t" style="left:1174.70px;top:312.03px;font-size:16.5px;line-height:16.5px;letter-spacing:0.684px;font-weight:400;color:#2b2f36">NA</span>
<span class="t" style="left:1424.90px;top:312.03px;font-size:16.5px;line-height:16.5px;letter-spacing:0.920px;font-weight:400;color:#2b2f36">2025-03-17 14:49</span>
<span class="t" style="left:87.80px;top:367.03px;font-size:16.5px;line-height:16.5px;letter-spacing:0.872px;font-weight:400;color:#2465d8">Dead Locks - Postgres</span>
<span class="t" style="left:711.20px;top:368.73px;font-size:14.5px;line-height:14.5px;letter-spacing:0.860px;font-weight:400;color:#2b2f36">Hyperscale</span>
<span class="t" style="left:1014.60px;top:367.03px;font-size:16.5px;line-height:16.5px;letter-spacing:1.147px;font-weight:400;color:#2b2f36">Metric</span>
<span class="t" style="left:1174.70px;top:367.03px;font-size:16.5px;line-height:16.5px;letter-spacing:0.684px;font-weight:400;color:#2b2f36">NA</span>
<span class="t" style="left:1424.90px;top:367.03px;font-size:16.5px;line-height:16.5px;letter-spacing:0.920px;font-weight:400;color:#2b2f36">2025-03-17 14:49</span>
<span class="t" style="left:88.80px;top:421.03px;font-size:16.5px;line-height:16.5px;letter-spacing:0.748px;font-weight:400;color:#2465d8">WAL Size - Postgres (Yesterday)</span>
<span class="t" style="left:711.20px;top:422.73px;font-size:14.5px;line-height:14.5px;letter-spacing:0.860px;font-weight:400;color:#2b2f36">Hyperscale</span>
<span class="t" style="left:1014.60px;top:421.03px;font-size:16.5px;line-height:16.5px;letter-spacing:1.147px;font-weight:400;color:#2b2f36">Metric</span>
<span class="t" style="left:1174.70px;top:421.03px;font-size:16.5px;line-height:16.5px;letter-spacing:0.684px;font-weight:400;color:#2b2f36">NA</span>
<span class="t" style="left:1424.90px;top:421.03px;font-size:16.5px;line-height:16.5px;letter-spacing:0.920px;font-weight:400;color:#2b2f36">2025-03-17 14:49</span>
<span class="t" style="left:88.80px;top:476.03px;font-size:16.5px;line-height:16.5px;letter-spacing:0.719px;font-weight:400;color:#2465d8">WAL Size - Postgres</span>
<span class="t" style="left:711.20px;top:477.73px;font-size:14.5px;line-height:14.5px;letter-spacing:0.860px;font-weight:400;color:#2b2f36">Hyperscale</span>
<span class="t" style="left:1014.60px;top:476.03px;font-size:16.5px;line-height:16.5px;letter-spacing:1.147px;font-weight:400;color:#2b2f36">Metric</span>
<span class="t" style="left:1174.70px;top:476.03px;font-size:16.5px;line-height:16.5px;letter-spacing:0.684px;font-weight:400;color:#2b2f36">NA</span>
<span class="t" style="left:1424.90px;top:476.03px;font-size:16.5px;line-height:16.5px;letter-spacing:0.920px;font-weight:400;color:#2b2f36">2025-03-17 14:49</span>
<span class="t" style="left:88.80px;top:531.03px;font-size:16.5px;line-height:16.5px;letter-spacing:0.701px;font-weight:400;color:#2465d8">Cache Hit Ratio - Postgres</span>
<span class="t" style="left:711.20px;top:532.73px;font-size:14.5px;line-height:14.5px;letter-spacing:0.860px;font-weight:400;color:#2b2f36">Hyperscale</span>
<span class="t" style="left:1014.60px;top:531.03px;font-size:16.5px;line-height:16.5px;letter-spacing:1.147px;font-weight:400;color:#2b2f36">Metric</span>
<span class="t" style="left:1174.70px;top:531.03px;font-size:16.5px;line-height:16.5px;letter-spacing:0.684px;font-weight:400;color:#2b2f36">NA</span>
<span class="t" style="left:1424.90px;top:531.03px;font-size:16.5px;line-height:16.5px;letter-spacing:0.920px;font-weight:400;color:#2b2f36">2025-03-17 14:49</span>
<span class="t" style="left:88.80px;top:586.03px;font-size:16.5px;line-height:16.5px;letter-spacing:0.723px;font-weight:400;color:#2465d8">AWS CloudFront total error rate</span>
<span class="t" style="left:711.20px;top:587.73px;font-size:14.5px;line-height:14.5px;letter-spacing:0.860px;font-weight:400;color:#2b2f36">Hyperscale</span>
<span class="t" style="left:1014.60px;top:586.03px;font-size:16.5px;line-height:16.5px;letter-spacing:1.147px;font-weight:400;color:#2b2f36">Metric</span>
<span class="t" style="left:1174.70px;top:586.03px;font-size:16.5px;line-height:16.5px;letter-spacing:0.684px;font-weight:400;color:#2b2f36">NA</span>
<span class="t" style="left:1424.90px;top:586.03px;font-size:16.5px;line-height:16.5px;letter-spacing:0.653px;font-weight:400;color:#2b2f36">2025-03-17 10:19</span>
<span class="t" style="left:88.80px;top:641.03px;font-size:16.5px;line-height:16.5px;letter-spacing:0.737px;font-weight:400;color:#2465d8">AWS CloudFront Time To First Byte</span>
<span class="t" style="left:711.20px;top:642.73px;font-size:14.5px;line-height:14.5px;letter-spacing:0.860px;font-weight:400;color:#2b2f36">Hyperscale</span>
<span class="t" style="left:1014.60px;top:641.03px;font-size:16.5px;line-height:16.5px;letter-spacing:1.147px;font-weight:400;color:#2b2f36">Metric</span>
<span class="t" style="left:1174.70px;top:641.03px;font-size:16.5px;line-height:16.5px;letter-spacing:0.684px;font-weight:400;color:#2b2f36">NA</span>
<span class="t" style="left:1424.90px;top:641.03px;font-size:16.5px;line-height:16.5px;letter-spacing:0.653px;font-weight:400;color:#2b2f36">2025-03-17 10:19</span>
<span class="t" style="left:88.80px;top:695.03px;font-size:16.5px;line-height:16.5px;letter-spacing:0.764px;font-weight:400;color:#2465d8">AWS CloudFront Function Compute Utilization</span>
<span class="t" style="left:711.20px;top:696.73px;font-size:14.5px;line-height:14.5px;letter-spacing:0.860px;font-weight:400;color:#2b2f36">Hyperscale</span>
<span class="t" style="left:1014.60px;top:695.03px;font-size:16.5px;line-height:16.5px;letter-spacing:1.147px;font-weight:400;color:#2b2f36">Metric</span>
<span class="t" style="left:1174.70px;top:695.03px;font-size:16.5px;line-height:16.5px;letter-spacing:0.684px;font-weight:400;color:#2b2f36">NA</span>
<span class="t" style="left:1424.90px;top:695.03px;font-size:16.5px;line-height:16.5px;letter-spacing:0.653px;font-weight:400;color:#2b2f36">2025-03-17 10:19</span>
<span class="t" style="left:30.30px;top:758.03px;font-size:16.5px;line-height:16.5px;letter-spacing:0.918px;font-weight:400;color:#2e3236">Showing 21-30 of 448 (Total Records 448)</span>
<span class="t" style="left:1243.00px;top:758.03px;font-size:16.5px;line-height:16.5px;letter-spacing:0.647px;font-weight:400;color:#2e3236">Show</span>
<span class="t" style="left:1306.70px;top:758.03px;font-size:16.5px;line-height:16.5px;letter-spacing:0.596px;font-weight:400;color:#2e3236">10 Items</span>
<span class="t" style="left:1496.00px;top:755.30px;font-size:15px;line-height:15px;letter-spacing:0.000px;font-weight:400;color:#23272c">1</span>
<span class="t" style="left:1535.00px;top:755.30px;font-size:15px;line-height:15px;letter-spacing:0.000px;font-weight:400;color:#23272c">2</span>
<span class="t" style="left:1575.00px;top:755.30px;font-size:15px;line-height:15px;letter-spacing:0.000px;font-weight:700;color:#ffffff">3</span>
<span class="t" style="left:1615.50px;top:755.30px;font-size:15px;line-height:15px;letter-spacing:0.000px;font-weight:400;color:#23272c">4</span>
<span class="t" style="left:1655.50px;top:755.30px;font-size:15px;line-height:15px;letter-spacing:0.000px;font-weight:400;color:#23272c">5</span>
<span class="t" style="left:1695.00px;top:755.30px;font-size:15px;line-height:15px;letter-spacing:0.000px;font-weight:400;color:#23272c">6</span>
<span class="t" style="left:1735.00px;top:755.30px;font-size:15px;line-height:15px;letter-spacing:0.000px;font-weight:400;color:#23272c">7</span>
<span class="t" style="left:1806.33px;top:755.30px;font-size:15px;line-height:15px;letter-spacing:0.000px;font-weight:400;color:#23272c">45</span>
</body></html>
